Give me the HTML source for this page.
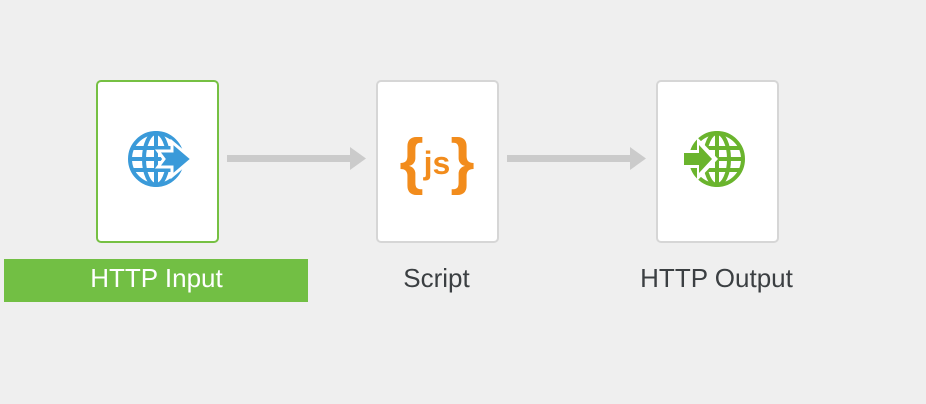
<!DOCTYPE html>
<html><head><style>
body{margin:0;width:926px;height:404px;background:#efefef;position:relative;overflow:hidden;font-family:"Liberation Sans",sans-serif}
.box{position:absolute;top:80px;width:119px;height:159px;background:#fff;border:2px solid #d6d6d6;border-radius:5px}
.lbl{position:absolute;top:261px;width:303px;text-align:center;font-size:26px;color:#3b3f42;line-height:34px}
</style></head><body>
<div class="box" style="left:96px;border-color:#76c043"></div>
<div class="box" style="left:376px"></div>
<div class="box" style="left:656px"></div>
<div style="position:absolute;left:4px;top:259px;width:304px;height:43px;background:#72bf44"></div>
<div class="lbl" style="left:5px;color:#fff">HTTP Input</div>
<div class="lbl" style="left:285px">Script</div>
<div class="lbl" style="left:565px">HTTP Output</div>
<svg width="926" height="404" style="position:absolute;left:0;top:0">
<g fill="#cbcbcb"><rect x="227" y="155" width="125" height="7"/><polygon points="350,147 366,158.5 350,170"/>
<rect x="507" y="155" width="125" height="7"/><polygon points="630,147 646,158.5 630,170"/></g>
<g fill="none" stroke="#3a9ad9" stroke-width="4">
<circle cx="156" cy="159" r="26"/><ellipse cx="156" cy="159" rx="12" ry="26"/>
<line x1="156" y1="133" x2="156" y2="185"/><line x1="130" y1="159" x2="182" y2="159"/>
<line x1="133" y1="148" x2="179" y2="148"/><line x1="133" y1="170" x2="179" y2="170"/></g>
<polygon points="158,151 172,151 172,142 192,159 172,176 172,167 158,167 164,159" fill="#3a9ad9" stroke="#fff" stroke-width="3"/>
<text x="437" y="182" text-anchor="middle" font-family="Liberation Sans,sans-serif" font-weight="bold" font-size="62" fill="#f28c1c">{<tspan font-size="32" dy="-8">js</tspan><tspan dy="8">}</tspan></text>
<g fill="none" stroke="#6ab42d" stroke-width="4">
<circle cx="717" cy="159" r="26"/><ellipse cx="717" cy="159" rx="12" ry="26"/>
<line x1="717" y1="133" x2="717" y2="185"/><line x1="691" y1="159" x2="743" y2="159"/>
<line x1="694" y1="148" x2="740" y2="148"/><line x1="694" y1="170" x2="740" y2="170"/></g>
<polygon points="682,150 697,150 697,137 718,159 697,181 697,168 682,168" fill="#fff"/>
<polygon points="684,153 699,153 699,145 712,159 699,173 699,165 684,165" fill="#6ab42d"/>
</svg>
</body></html>
